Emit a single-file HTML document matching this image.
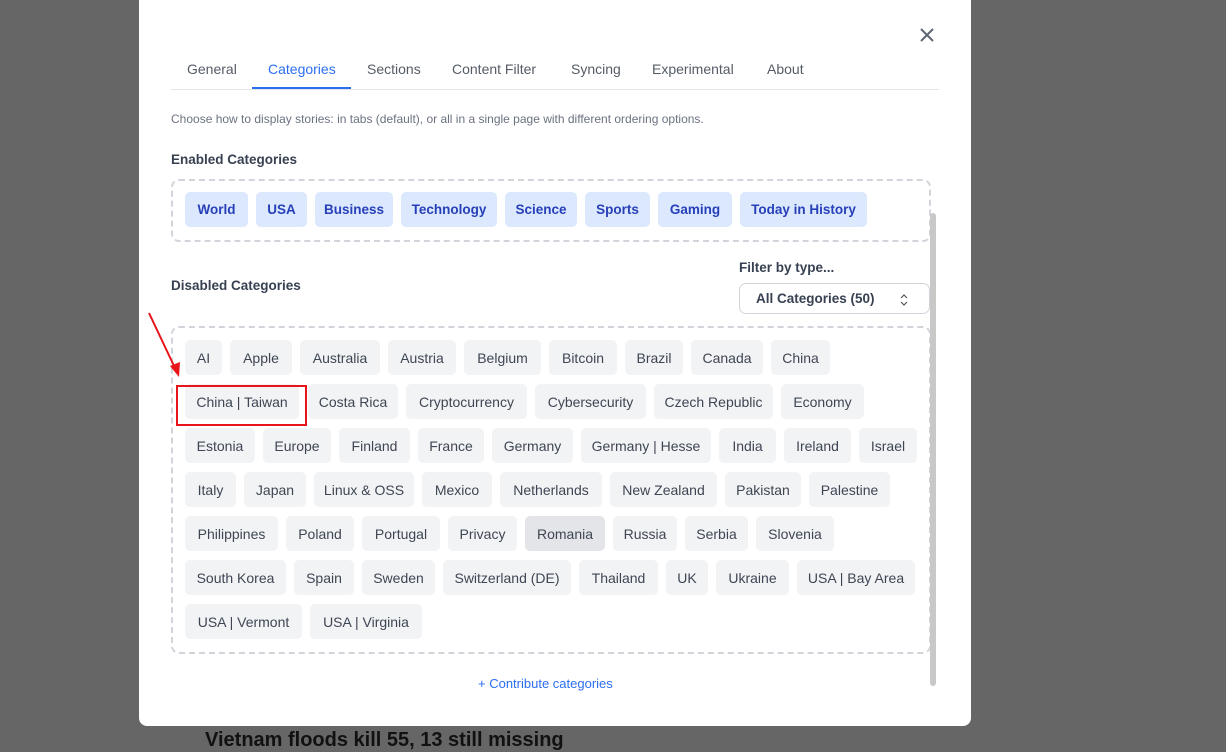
<!DOCTYPE html>
<html><head><meta charset="utf-8"><style>
*{box-sizing:border-box;margin:0;padding:0}
body{width:1226px;height:737px;background:#666;font-family:"Liberation Sans",sans-serif;position:relative;overflow:hidden}
.bgtext{position:absolute;left:205px;top:729px;font-size:20px;color:#111;font-weight:bold}
.modal{position:absolute;left:139px;top:0;width:832px;height:726px;background:#fff;border-radius:0 0 8px 8px}
.tab{position:absolute;top:61px;font-size:14px;color:#555c66}
.tab.act{color:#2b6ff0}
.line{position:absolute;left:32px;top:89px;width:768px;height:1px;background:#e3e5e8}
.ul{position:absolute;left:113px;top:87px;width:99px;height:2px;background:#2b6ff0}
.desc{position:absolute;left:32px;top:112px;font-size:12px;color:#6b7280}
.h{position:absolute;font-size:13.5px;color:#374151;font-weight:bold}
.box{position:absolute;left:32px;width:760px;border:2px dashed #d1d5db;border-radius:8px}
.chip{position:absolute;height:35px;border-radius:5px;font-size:14px;display:flex;align-items:center;justify-content:center;white-space:nowrap}
.en{background:#dbe8fd;color:#2740b8;font-weight:bold;font-size:13.5px}
.dis{background:#f2f3f5;color:#3f4653}
.sel{position:absolute;left:600px;top:283px;width:191px;height:31px;border:1px solid #d1d5db;border-radius:7px;font-size:13.5px;color:#374151;font-weight:bold;padding:7px 0 0 16px}
.sb{position:absolute;left:791px;top:213px;width:6px;height:473px;background:#c8c8c8;border-radius:3px}
.contrib{position:absolute;left:339px;top:676px;font-size:13px;color:#2b6ff0}
</style></head><body>
<div class="bgtext">Vietnam floods kill 55, 13 still missing</div>
<div class="modal">
<svg style="position:absolute;left:780px;top:27px" width="16" height="16"><path d="M2 2L14 14M14 2L2 14" stroke="#5f6673" stroke-width="2"/></svg>
<div class="tab" style="left:48px">General</div>
<div class="tab act" style="left:129px">Categories</div>
<div class="tab" style="left:228px">Sections</div>
<div class="tab" style="left:313px">Content Filter</div>
<div class="tab" style="left:432px">Syncing</div>
<div class="tab" style="left:513px">Experimental</div>
<div class="tab" style="left:628px">About</div>
<div class="line"></div><div class="ul"></div>
<div class="desc">Choose how to display stories: in tabs (default), or all in a single page with different ordering options.</div>
<div class="h" style="left:32px;top:152px">Enabled Categories</div>
<div class="box" style="top:179px;height:63px"></div>
<div class="h" style="left:32px;top:278px">Disabled Categories</div>
<div class="h" style="left:600px;top:260px;font-weight:bold">Filter by type...</div>
<div class="sel">All Categories (50)<svg style="position:absolute;right:20px;top:9px" width="10" height="14"><path d="M2 5L5 2L8 5M2 9L5 12L8 9" stroke="#555" fill="none" stroke-width="1.2"/></svg></div>
<div class="box" style="top:326px;height:328px"></div>
<div class="sb"></div>
<div class="contrib">+ Contribute categories</div>
</div>
<div id="chips"></div>
<div style="position:absolute;left:176px;top:385px;width:131px;height:41px;border:2px solid #e8141a"></div>
<svg style="position:absolute;left:0;top:0" width="300" height="400"><line x1="149" y1="313" x2="175" y2="368" stroke="#e8141a" stroke-width="2"/><path d="M170 366L179 377L180 362Z" fill="#e8141a"/></svg>
<script>
const E=[["World",185,248],["USA",256,307],["Business",315,393],["Technology",401,497],["Science",505,577],["Sports",585,650],["Gaming",658,732],["Today in History",740,867]];
const D=[[340,[["AI",185,222],["Apple",230,292],["Australia",300,380],["Austria",388,456],["Belgium",464,541],["Bitcoin",549,617],["Brazil",625,683],["Canada",691,763],["China",771,830]]],
[384,[["China | Taiwan",185,299],["Costa Rica",308,398],["Cryptocurrency",406,527],["Cybersecurity",535,646],["Czech Republic",654,773],["Economy",781,864]]],
[428,[["Estonia",185,255],["Europe",263,331],["Finland",339,410],["France",418,484],["Germany",492,573],["Germany | Hesse",581,711],["India",719,776],["Ireland",784,851],["Israel",859,917]]],
[472,[["Italy",185,236],["Japan",244,306],["Linux &amp; OSS",314,414],["Mexico",422,492],["Netherlands",500,602],["New Zealand",610,717],["Pakistan",725,801],["Palestine",809,890]]],
[516,[["Philippines",185,278],["Poland",286,354],["Portugal",362,440],["Privacy",448,517],["Romania",525,605],["Russia",613,677],["Serbia",685,748],["Slovenia",756,834]]],
[560,[["South Korea",185,286],["Spain",294,354],["Sweden",362,435],["Switzerland (DE)",443,571],["Thailand",579,658],["UK",666,708],["Ukraine",716,789],["USA | Bay Area",797,915]]],
[604,[["USA | Vermont",185,302],["USA | Virginia",310,422]]]];
let h="";
E.forEach(c=>h+=`<div class="chip en" style="left:${c[1]}px;top:192px;width:${c[2]-c[1]}px">${c[0]}</div>`);
D.forEach(r=>r[1].forEach(c=>h+=`<div class="chip dis" style="left:${c[1]}px;top:${r[0]}px;width:${c[2]-c[1]}px${c[0]=="Romania"?";background:#e4e5e9":""}">${c[0]}</div>`));
document.getElementById("chips").innerHTML=h;
</script>
</body></html>
